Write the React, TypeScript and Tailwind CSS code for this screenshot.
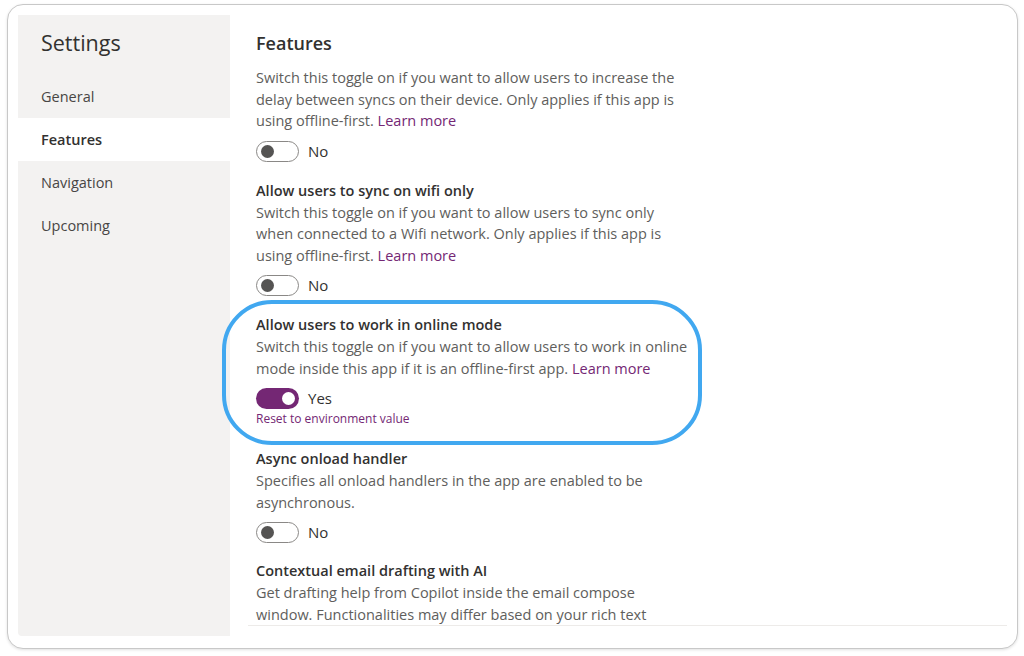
const navItems = ['General', 'Features', 'Navigation', 'Upcoming'];

const Toggle = ({ on, label }: { on: boolean; label: string }) => (
  <div className="mt-[9px] flex h-[21px] items-center gap-[9px]">
    {on ? (
      <div className="flex h-[21px] w-[43px] items-center justify-end rounded-full bg-[#742774] pr-[4px]">
        <div className="h-[13px] w-[13px] rounded-full bg-white" />
      </div>
    ) : (
      <div className="flex h-[21px] w-[43px] items-center rounded-full border border-[#8a8886] bg-white pl-[4px]">
        <div className="h-[13px] w-[13px] rounded-full bg-[#555453]" />
      </div>
    )}
    <span className="text-[15px] text-[#323130]">{label}</span>
  </div>
);

const LearnMore = () => <span className="text-[#742774]">Learn more</span>;

const Section = ({
  title,
  children,
  className = '',
}: {
  title?: string;
  children: React.ReactNode;
  className?: string;
}) => (
  <div className={className}>
    {title && <div className="text-[14.5px] font-semibold leading-[22px] text-[#323130]">{title}</div>}
    <p className="w-[434px] text-[14.5px] leading-[21.5px] text-[#605e5c]">{children}</p>
  </div>
);

export default function App() {
  return (
    <div className="h-[656px] w-[1024px] bg-white pl-[7px] pt-[4px] font-['Open_Sans',sans-serif]">
      <div className="flex h-[645px] w-[1011px] rounded-[16px] border border-[#c8c8c8] bg-white p-[10px] shadow-[0_1px_3px_rgba(0,0,0,0.12)]">
        {/* Sidebar */}
        <div className="flex h-[621px] w-[212px] flex-col rounded-bl-[4px] bg-[#f3f2f1]">
          <div className="ml-[23px] mt-[13px] mb-[17px] text-[21.5px] leading-[30px] text-[#323130]">Settings</div>
          {navItems.map((item) => (
            <div
              key={item}
              className={`flex h-[43px] items-center pl-[23px] text-[14.5px] ${
                item === 'Features' ? 'bg-white font-semibold text-[#323130]' : 'text-[#484644]'
              }`}
            >
              {item}
            </div>
          ))}
        </div>

        {/* Content */}
        <div className="flex flex-1 flex-col">
          <div className="-ml-[12px] h-[610px] overflow-hidden pl-[38px]">
            <div className="mt-[16px] text-[18px] font-semibold leading-[24px] text-[#323130]">Features</div>

            <Section className="mt-[12px]">
              Switch this toggle on if you want to allow users to increase the delay between syncs on their device. Only
              applies if this app is using offline-first. <LearnMore />
            </Section>
            <Toggle on={false} label="No" />

            <Section title="Allow users to sync on wifi only" className="mt-[18px]">
              Switch this toggle on if you want to allow users to sync only when connected to a Wifi network. Only applies if
              this app is using offline-first. <LearnMore />
            </Section>
            <Toggle on={false} label="No" />

            <div className="relative mt-[18px]">
              {/* highlight ring */}
              <div className="pointer-events-none absolute -left-[34px] -top-[14px] h-[145px] w-[480px] rounded-[50px] border-[4px] border-[#41a8f0]" />
              <Section title="Allow users to work in online mode">
                Switch this toggle on if you want to allow users to work in online mode inside this app if it is an
                offline-first app. <LearnMore />
              </Section>
              <Toggle on={true} label="Yes" />
              <div className="mt-[2px] text-[12px] leading-[16px] text-[#742774]">Reset to environment value</div>
            </div>

            <Section title="Async onload handler" className="mt-[21px]">
              Specifies all onload handlers in the app are enabled to be asynchronous.
            </Section>
            <Toggle on={false} label="No" />

            <Section title="Contextual email drafting with AI" className="mt-[17px]">
              Get drafting help from Copilot inside the email compose window. Functionalities may differ based on your rich
              text editor configuration.
            </Section>
          </div>
          <div className="ml-[18px] h-px bg-[#edebe9]" />
        </div>
      </div>
    </div>
  );
}
